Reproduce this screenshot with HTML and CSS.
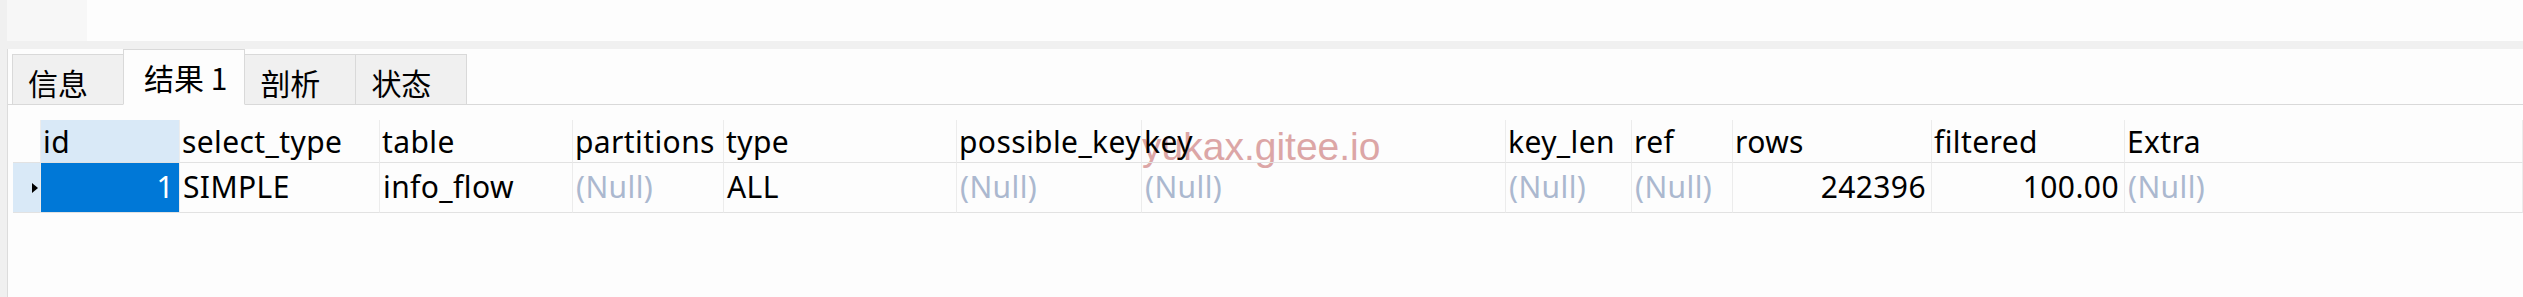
FILE: index.html
```html
<!DOCTYPE html>
<html lang="zh-CN">
<head>
    <meta charset="UTF-8">
    <title>结果 1</title>
    <link rel="stylesheet" href="styles.css">
</head>
<body>
    <div class="toolbar">
        <div class="tool-edge"></div>
        <div class="tool-box"></div>
    </div>
    <div class="band"></div>
    <div class="main">
        <div class="side"></div>
        <div class="panel">
            <div class="tabs">
                <div class="tab">信息</div>
                <div class="tab active">结果 1</div>
                <div class="tab">剖析</div>
                <div class="tab">状态</div>
            </div>
            <div class="result">
                <div class="watermark">yukax.gitee.io</div>
                <div class="grid">
                    <!-- header -->
                    <div class="cell head"></div>
                    <div class="cell head current">id</div>
                    <div class="cell head">select_type</div>
                    <div class="cell head">table</div>
                    <div class="cell head">partitions</div>
                    <div class="cell head">type</div>
                    <div class="cell head">possible_keys</div>
                    <div class="cell head">key</div>
                    <div class="cell head">key_len</div>
                    <div class="cell head">ref</div>
                    <div class="cell head">rows</div>
                    <div class="cell head">filtered</div>
                    <div class="cell head">Extra</div>

                    <!-- row 1 -->
                    <div class="cell marker">
                        <svg width="6" height="10" viewBox="0 0 6 10"><polygon points="0,0 6,5 0,10" fill="#000"/></svg>
                    </div>
                    <div class="cell num selected">1</div>
                    <div class="cell">SIMPLE</div>
                    <div class="cell">info_flow</div>
                    <div class="cell null">(Null)</div>
                    <div class="cell">ALL</div>
                    <div class="cell null">(Null)</div>
                    <div class="cell null">(Null)</div>
                    <div class="cell null">(Null)</div>
                    <div class="cell null">(Null)</div>
                    <div class="cell num">242396</div>
                    <div class="cell num">100.00</div>
                    <div class="cell null">(Null)</div>
                </div>
            </div>
        </div>
    </div>
</body>
</html>
```

FILE: styles.css
```css
html, body {
    margin: 0;
    padding: 0;
}
body {
    width: 2523px;
    height: 297px;
    overflow: hidden;
    background: #fdfdfd;
    color: #000;
    font-family: "Noto Sans", "Noto Sans CJK SC", sans-serif;
}
.toolbar {
    display: flex;
    height: 41px;
}
.tool-edge {
    width: 7px;
    background: #f0f0f0;
}
.tool-box {
    width: 80px;
    background: #f7f7f7;
}
.band {
    height: 8px;
    background: #f0f0f0;
}
.main {
    display: flex;
    height: 248px;
}
.side {
    width: 7px;
    background: #f0f0f0;
    border-right: 1px solid #dcdcdc;
}
.panel {
    flex: 1;
    display: flex;
    flex-direction: column;
}
.tabs {
    display: flex;
    align-items: flex-end;
    height: 55px;
    padding-left: 4px;
    border-bottom: 1px solid #d9d9d9;
}
.tab {
    box-sizing: border-box;
    height: 51px;
    margin-bottom: -1px;
    margin-right: -1px;
    padding: 12px 35px 0 15px;
    background: #f0f0f0;
    border: 1px solid #d9d9d9;
    font-family: "Noto Sans CJK SC", "Noto Sans", sans-serif;
    font-size: 30px;
    line-height: 30px;
}
.tab.active {
    height: 56px;
    padding: 12px 17px 0 20px;
    background: #fdfdfd;
    border-bottom-color: #fdfdfd;
    position: relative;
}
.result {
    position: relative;
    flex: 1;
}
.watermark {
    position: absolute;
    left: 1134px;
    top: 22px;
    font-family: "Liberation Sans", Arial, sans-serif;
    font-size: 39px;
    line-height: 39px;
    color: #dca6a6;
}
.grid {
    position: relative;
    display: grid;
    grid-template-columns: 28px 139px 200px 193px 151px 233px 185px 364px 126px 101px 199px 193px 1fr;
    grid-template-rows: 43px 50px;
    margin: 15px 0 0 5px;
    font-size: 30px;
    line-height: 30px;
    letter-spacing: 0.4px;
}
.cell {
    box-sizing: border-box;
    padding: 9px 5px 0 3px;
    border-right: 1px solid #ececec;
    border-bottom: 1px solid #e2e2e2;
    white-space: nowrap;
    overflow: hidden;
}
.head {
    padding-top: 7px;
    padding-left: 2px;
}
.head.current {
    background: #d9e9f7;
}
.marker {
    background: #d9e9f7;
    padding: 19px 0 0 19px;
    line-height: 0;
}
.num {
    text-align: right;
}
.selected {
    background: #0078d7;
    color: #fff;
}
.null {
    color: #abb8cf;
}
```
